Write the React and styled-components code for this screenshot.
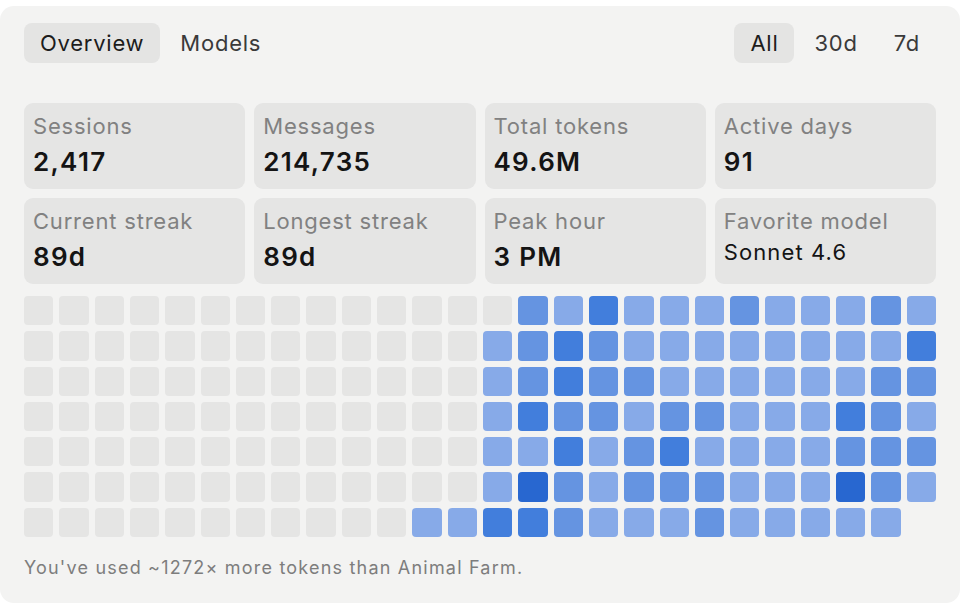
import React from "react";
import styled, { createGlobalStyle } from "styled-components";

const GlobalStyle = createGlobalStyle`
  html, body {
    margin: 0;
    padding: 0;
    background: #ffffff;
  }
  body {
    font-family: Inter, "Noto Sans", "Liberation Sans", sans-serif;
    -webkit-font-smoothing: antialiased;
  }
`;

const Page = styled.div`
  padding-top: 6px;
  width: 964px;
  height: 608px;
  box-sizing: border-box;
`;

const Card = styled.div`
  width: 960px;
  height: 597px;
  box-sizing: border-box;
  background: #f3f3f2;
  border-radius: 14px;
  padding: 17px 24px 0 24px;
  display: flex;
  flex-direction: column;
`;

const Toolbar = styled.div`
  display: flex;
  justify-content: space-between;
  align-items: center;
  height: 40px;
`;

const TabGroup = styled.div`
  display: flex;
  gap: 4px;
`;

const Tab = styled.button`
  height: 40px;
  padding: 0 16px;
  border: 0;
  border-radius: 8px;
  font-family: inherit;
  font-size: 22px;
  letter-spacing: 0.75px;
  color: ${({ $active }) => ($active ? "#1c1c1c" : "#3a3a3a")};
  background: ${({ $active }) => ($active ? "#e4e4e3" : "transparent")};
  cursor: pointer;
`;

const StatGrid = styled.div`
  margin-top: 40px;
  display: grid;
  grid-template-columns: repeat(4, 1fr);
  gap: 9px;
`;

const StatCard = styled.div`
  height: 86px;
  box-sizing: border-box;
  background: #e5e5e4;
  border-radius: 9px;
  padding: 10px 9px 0 9px;
`;

const StatLabel = styled.div`
  font-size: 22px;
  line-height: 26.4px;
  color: #818181;
  letter-spacing: 0.8px;
`;

const StatValue = styled.div`
  margin-top: ${({ $plain }) => ($plain ? "5px" : "7px")};
  font-size: ${({ $plain }) => ($plain ? "22px" : "26px")};
  font-weight: ${({ $plain }) => ($plain ? 400 : 600)};
  line-height: ${({ $plain }) => ($plain ? "26.4px" : "31.2px")};
  color: #141414;
  letter-spacing: ${({ $plain }) => ($plain ? "1.1px" : "1.3px")};
`;

const Heatmap = styled.div`
  margin-top: 12px;
  display: grid;
  grid-template-columns: repeat(26, 1fr);
  grid-auto-rows: 29.3px;
  gap: 6px;
`;

const Cell = styled.div`
  border-radius: 4px;
  background: ${({ $level }) =>
    ["#e5e5e4", "#87aae8", "#6594e1", "#427edc", "#2867d0"][$level]};
`;

const Footer = styled.div`
  margin-top: 20px;
  font-size: 18px;
  line-height: 22px;
  color: #7d7d7d;
  letter-spacing: 1.2px;
`;

const stats = [
  { label: "Sessions", value: "2,417" },
  { label: "Messages", value: "214,735" },
  { label: "Total tokens", value: "49.6M" },
  { label: "Active days", value: "91" },
  { label: "Current streak", value: "89d" },
  { label: "Longest streak", value: "89d" },
  { label: "Peak hour", value: "3 PM" },
  { label: "Favorite model", value: "Sonnet 4.6", plain: true },
];

// activity level per day, by row; each row lists the active stretch from its start column
const rows = [
  { start: 15, cells: "2131112111211" },
  { start: 14, cells: "1232111111113" },
  { start: 14, cells: "1232211111122" },
  { start: 14, cells: "1322122111321" },
  { start: 14, cells: "1131231111222" },
  { start: 14, cells: "1421222111421" },
  { start: 12, cells: "11332111211111" },
];

const buildCells = () => {
  const out = [];
  rows.forEach((row, r) => {
    for (let c = 1; c <= 26; c++) {
      const idx = c - row.start;
      if (r === 6 && c === 26) {
        out.push(null);
      } else if (idx >= 0 && idx < row.cells.length) {
        out.push(Number(row.cells[idx]));
      } else {
        out.push(0);
      }
    }
  });
  return out;
};

export default function App() {
  const cells = buildCells();
  return (
    <Page>
      <GlobalStyle />
      <Card>
        <Toolbar>
          <TabGroup>
            <Tab $active>Overview</Tab>
            <Tab>Models</Tab>
          </TabGroup>
          <TabGroup>
            <Tab $active>All</Tab>
            <Tab>30d</Tab>
            <Tab>7d</Tab>
          </TabGroup>
        </Toolbar>
        <StatGrid>
          {stats.map((s) => (
            <StatCard key={s.label}>
              <StatLabel>{s.label}</StatLabel>
              <StatValue $plain={s.plain}>{s.value}</StatValue>
            </StatCard>
          ))}
        </StatGrid>
        <Heatmap>
          {cells.map((lvl, i) =>
            lvl === null ? <div key={i} /> : <Cell key={i} $level={lvl} />
          )}
        </Heatmap>
        <Footer>You've used ~1272× more tokens than Animal Farm.</Footer>
      </Card>
    </Page>
  );
}
